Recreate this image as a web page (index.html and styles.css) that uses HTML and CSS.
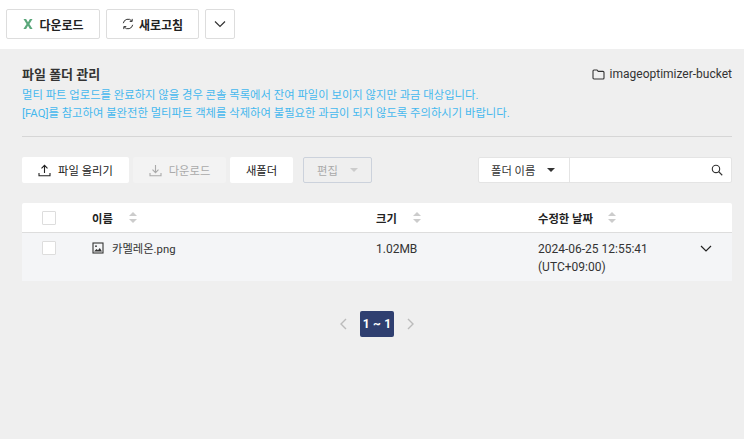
FILE: index.html
```html
<!DOCTYPE html>
<html lang="ko">
<head>
    <meta charset="UTF-8">
    <meta name="viewport" content="width=device-width, initial-scale=1.0">
    <title>파일 폴더 관리</title>
    <link rel="stylesheet" href="styles.css">
</head>
<body>
    <!-- Top action bar -->
    <div class="top-bar">
        <button class="top-button excel-button">
            <svg width="12" height="12" viewBox="0 0 12 12"><path d="M1.5 1h2.6L6 4.2 7.9 1h2.6L7.4 6l3.2 5H7.9L6 7.8 4.1 11H1.4l3.2-5z" fill="#5aa77a"/></svg>
            <span>다운로드</span>
        </button>
        <button class="top-button refresh-button">
            <svg width="12" height="12" viewBox="0 0 12 12" fill="none" stroke="#333" stroke-width="1"><path d="M1.3 5.2A4.8 4.8 0 0 1 9.8 3"/><path d="M10.7 6.8A4.8 4.8 0 0 1 2.2 9"/><path d="M10.2 0.9v2.5H7.7M1.8 11.1V8.6h2.5"/></svg>
            <span>새로고침</span>
        </button>
        <button class="top-button more-button">
            <svg width="12" height="8" viewBox="0 0 12 8" fill="none" stroke="#333" stroke-width="1.2"><path d="M1 1.5l5 5 5-5"/></svg>
        </button>
    </div>

    <div class="main-content">
        <div class="title-row">
            <h1>파일 폴더 관리</h1>
            <div class="bucket">
                <svg width="13" height="11" viewBox="0 0 13 11" fill="none" stroke="#333" stroke-width="1.1"><path d="M1 2a1 1 0 0 1 1-1h3l1.2 1.4H11a1 1 0 0 1 1 1V9a1 1 0 0 1-1 1H2a1 1 0 0 1-1-1z"/></svg>
                <span>imageoptimizer-bucket</span>
            </div>
        </div>
        <div class="notices">
            <p class="notice">멀티 파트 업로드를 완료하지 않을 경우 콘솔 목록에서 잔여 파일이 보이지 않지만 과금 대상입니다.</p>
            <p class="notice">[FAQ]를 참고하여 불완전한 멀티파트 객체를 삭제하여 불필요한 과금이 되지 않도록 주의하시기 바랍니다.</p>
        </div>

        <div class="divider"></div>

        <div class="toolbar">
            <button class="tool-button upload-button">
                <svg width="13" height="13" viewBox="0 0 13 13" fill="none" stroke="#222" stroke-width="1.1"><path d="M6.5 9V1.5M3.5 4.3l3-3 3 3M1 9v2.8h11V9"/></svg>
                <span>파일 올리기</span>
            </button>
            <button class="tool-button download-button" disabled>
                <svg width="13" height="13" viewBox="0 0 13 13" fill="none" stroke="#aaa" stroke-width="1.1"><path d="M6.5 1v7.5M3.5 5.7l3 3 3-3M1 9v2.8h11V9"/></svg>
                <span>다운로드</span>
            </button>
            <button class="tool-button folder-button">새폴더</button>
            <button class="tool-button edit-button" disabled>
                <span>편집</span>
                <i class="caret caret-light"></i>
            </button>
            <div class="search-box">
                <div class="search-select">
                    <span>폴더 이름</span>
                    <i class="caret"></i>
                </div>
                <div class="search-input">
                    <svg width="12" height="12" viewBox="0 0 13 13" fill="none" stroke="#333" stroke-width="1.2"><circle cx="5.4" cy="5.4" r="4"/><path d="M8.4 8.4l3.8 3.8"/></svg>
                </div>
            </div>
        </div>

        <div class="file-table">
            <div class="table-row table-head">
                <div class="col-check"><i class="checkbox"></i></div>
                <div class="col-name">이름<i class="sort"></i></div>
                <div class="col-size">크기<i class="sort"></i></div>
                <div class="col-date">수정한 날짜<i class="sort"></i></div>
            </div>
            <div class="table-row table-item">
                <div class="col-check"><i class="checkbox"></i></div>
                <div class="col-name">
                    <svg width="12" height="12" viewBox="0 0 12 12" fill="none" stroke="#333" stroke-width="1.1"><rect x="1" y="1" width="10" height="10"/><circle cx="4" cy="4.2" r="0.9" fill="#333" stroke="none"/><path d="M2 9.5l2.5-2.6 1.5 1.3L7.8 6l2.2 3.5z" fill="#333" stroke="none"/></svg>
                    <span class="file-name">카멜레온.png</span>
                </div>
                <div class="col-size">1.02MB</div>
                <div class="col-date">2024-06-25 12:55:41<br>(UTC+09:00)</div>
                <div class="col-toggle">
                    <svg width="12" height="7" viewBox="0 0 12 7" fill="none" stroke="#222" stroke-width="1.2"><path d="M1 1l5 5 5-5"/></svg>
                </div>
            </div>
        </div>

        <div class="pagination">
            <svg width="9" height="12" viewBox="0 0 9 12" fill="none" stroke="#bbb" stroke-width="1.4"><path d="M7 1L2 6l5 5"/></svg>
            <span class="page-current">1 ~ 1</span>
            <svg width="9" height="12" viewBox="0 0 9 12" fill="none" stroke="#bbb" stroke-width="1.4"><path d="M2 1l5 5-5 5"/></svg>
        </div>
    </div>
</body>
</html>
```

FILE: styles.css
```css
* {
    box-sizing: border-box;
}

html, body {
    height: 100%;
}

body {
    margin: 0;
    background-color: #efefef;
    color: #333333;
    font-family: Roboto, "Noto Sans CJK KR", sans-serif;
    font-size: 12px;
    overflow: hidden;
}

button {
    font-family: inherit;
    font-size: 12px;
}

/* Top action bar */
.top-bar {
    height: 49px;
    background-color: #ffffff;
    padding: 9px 6px 0;
    display: flex;
    gap: 6px;
    align-items: flex-start;
}

.top-button {
    height: 30px;
    padding: 0;
    background-color: #ffffff;
    border: 1px solid #dddddd;
    border-radius: 2px;
    color: #222222;
    font-weight: 700;
    display: flex;
    align-items: center;
    justify-content: center;
    gap: 5px;
}

.excel-button {
    width: 94px;
}

.refresh-button {
    width: 93px;
}

.more-button {
    width: 30px;
}

.main-content {
    padding: 16px 12px 0 22px;
}

.title-row {
    display: flex;
    justify-content: space-between;
    align-items: center;
    height: 18px;
}

h1 {
    margin: 0 0 2px;
    font-size: 13px;
    font-weight: 700;
    color: #333333;
}

.bucket {
    display: flex;
    align-items: center;
    gap: 5px;
    color: #333333;
    font-size: 12px;
}

.notices {
    margin-top: 3px;
}

.notice {
    margin: 0;
    color: #45b8ee;
    font-size: 11.33px;
    line-height: 18px;
    white-space: nowrap;
}

.divider {
    height: 1px;
    margin-top: 14px;
    background-color: #d6d6d6;
}

.toolbar {
    display: flex;
    align-items: center;
    margin-top: 20px;
    height: 26px;
}

.tool-button {
    height: 26px;
    padding: 0;
    border: none;
    border-radius: 2px;
    background-color: #ffffff;
    color: #222222;
    font-size: 11.3px;
    display: flex;
    align-items: center;
    justify-content: center;
    gap: 7px;
}

.upload-button {
    width: 107px;
}

.download-button {
    width: 93px;
    margin-left: 4px;
    background-color: #f3f3f3;
    color: #aaaaaa;
}

.folder-button {
    width: 63px;
    margin-left: 4px;
}

.edit-button {
    width: 69px;
    margin-left: 10px;
    gap: 12px;
    background-color: #efefef;
    border: 1px solid #ccd2dc;
    color: #aaaaaa;
}

.caret {
    width: 0;
    height: 0;
    border-left: 4px solid transparent;
    border-right: 4px solid transparent;
    border-top: 4px solid #333333;
}

.caret-light {
    border-top-color: #cccccc;
}

.search-box {
    margin-left: auto;
    width: 254px;
    height: 26px;
    display: flex;
    background-color: #ffffff;
    border: 1px solid #e4e4e4;
    border-radius: 2px;
}

.search-select {
    width: 91px;
    border-right: 1px solid #e4e4e4;
    display: flex;
    align-items: center;
    gap: 12px;
    padding-left: 12px;
    font-size: 11.3px;
}

.search-input {
    flex: 1;
    display: flex;
    align-items: center;
    justify-content: flex-end;
    padding-right: 8px;
}

/* File table */
.file-table {
    margin-top: 20px;
}

.table-row {
    display: grid;
    grid-template-columns: 70px 284px 162px 158px 36px;
}

.table-head {
    height: 30px;
    background-color: #ffffff;
    border-bottom: 1px solid #dddddd;
    border-radius: 2px 2px 0 0;
    align-items: center;
    font-size: 11.3px;
    font-weight: 700;
    color: #222222;
}

.table-item {
    height: 48px;
    background-color: #f4f5f7;
    padding-top: 7px;
    line-height: 18px;
}

.col-check {
    padding-left: 20px;
}

.table-item .col-check {
    padding-top: 1px;
}

.checkbox {
    display: block;
    width: 14px;
    height: 14px;
    background-color: #ffffff;
    border: 1px solid #dddddd;
    border-radius: 1px;
}

.col-name {
    display: flex;
    align-items: flex-start;
    gap: 8px;
}

.file-name {
    margin-top: 1px;
    font-size: 11.3px;
}

.table-head .col-name,
.table-head .col-size,
.table-head .col-date {
    display: flex;
    align-items: center;
    gap: 16px;
}

.table-head .col-date {
    gap: 15px;
}

.table-item .col-name svg {
    margin-top: 2px;
}

.col-toggle {
    padding: 5px 0 0 4px;
    line-height: 0;
}

.sort {
    position: relative;
    display: block;
    width: 8px;
    height: 11px;
}

.sort::before,
.sort::after {
    content: "";
    position: absolute;
    left: 0;
    border-left: 4px solid transparent;
    border-right: 4px solid transparent;
}

.sort::before {
    top: 0;
    border-bottom: 4px solid #cccccc;
}

.sort::after {
    bottom: 0;
    border-top: 4px solid #cccccc;
}

.pagination {
    margin-top: 30px;
    display: flex;
    align-items: center;
    justify-content: center;
    gap: 12px;
}

.page-current {
    width: 34px;
    height: 26px;
    background-color: #2f3f70;
    border-radius: 2px;
    color: #ffffff;
    font-weight: 700;
    font-size: 12px;
    word-spacing: 0.5px;
    display: flex;
    align-items: center;
    justify-content: center;
}
```
